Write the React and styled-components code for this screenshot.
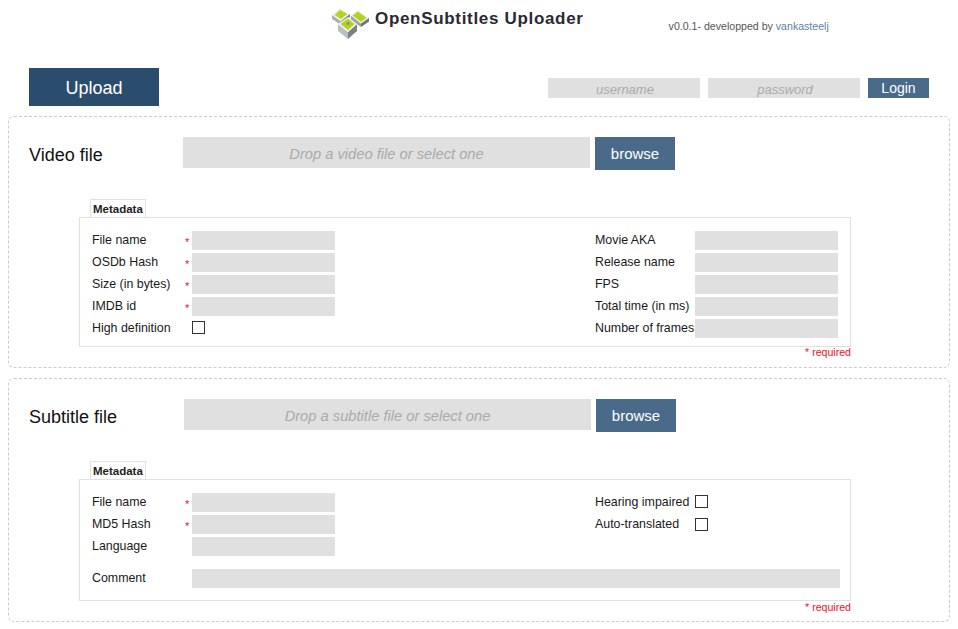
import styled, { createGlobalStyle } from "styled-components";

const GlobalStyle = createGlobalStyle`
body {
  margin: 0;
  background: #fff;
  font-family: "Liberation Sans", Arial, sans-serif;
  color: #111;
}
`

const Header = styled.header`
  display: flex;
  height: 68px;
  padding-left: 332px;
  box-sizing: border-box;
`
const Logo = styled.svg`
  width: 37px;
  height: 33px;
  margin-top: 6px;
  flex: none;
`
const AppTitle = styled.h1`
  margin: 9px 0 0 6px;
  font-size: 17px;
  line-height: 20px;
  font-weight: bold;
  letter-spacing: 0.68px;
  color: #2a2a33;
  white-space: nowrap;
`
const Version = styled.div`
  margin: 20px 0 0 85px;
  font-size: 10.6px;
  line-height: 12px;
  color: #555;
  white-space: nowrap;
  a {
    color: #5d7fa3;
    text-decoration: none;
  }
`
const TopBar = styled.div`
  display: flex;
  justify-content: space-between;
  padding: 0 29px;
  margin-bottom: 10px;
`
const UploadButton = styled.button`
  width: 130px;
  height: 38px;
  border: 0;
  padding: 2px 0 0;
  background: #2a4d6e;
  color: #fff;
  font: 18px "Liberation Sans", Arial, sans-serif;
`
const LoginForm = styled.form`
  display: flex;
  gap: 8px;
  margin-top: 10px;
`
const LoginInput = styled.input`
  width: 152px;
  height: 20px;
  box-sizing: border-box;
  border: 0;
  padding: 2px 0 0 2px;
  background: #e0e0e0;
  text-align: center;
  font: italic 13px "Liberation Sans", Arial, sans-serif;
  &::placeholder { color: #aaa; opacity: 1; }
`
const LoginButton = styled.button`
  width: 61px;
  height: 20px;
  border: 0;
  padding: 0;
  background: #4a6a8a;
  color: #fff;
  font: 14px "Liberation Sans", Arial, sans-serif;
`
const Panel = styled.section`
  width: 942px;
  box-sizing: border-box;
  margin: 0 0 10px 8px;
  padding: 20px 0 0 20px;
  height: ${p => p.$height}px;
  border: 1px dashed #ccc;
  border-radius: 6px;
`
const DropRow = styled.div`
  display: flex;
  align-items: flex-start;
  margin-bottom: 27px;
`
const PanelTitle = styled.h2`
  width: ${p => p.$width}px;
  margin: 0;
  padding-top: 2px;
  font-size: 18px;
  line-height: 33px;
  font-weight: normal;
  color: #111;
`
const DropInput = styled.input`
  width: 407px;
  height: 31px;
  box-sizing: border-box;
  border: 0;
  padding: 3px 0 0;
  margin-right: 5px;
  background: #e0e0e0;
  text-align: center;
  font: italic 14.7px "Liberation Sans", Arial, sans-serif;
  &::placeholder { color: #aaa; opacity: 1; }
`
const BrowseButton = styled.button`
  width: 80px;
  height: 33px;
  border: 0;
  padding: 0;
  background: #4a6a8a;
  color: #fff;
  font: 15px "Liberation Sans", Arial, sans-serif;
`
const Metadata = styled.div`
  width: 772px;
  margin-left: 50px;
`
const Tab = styled.div`
  width: 56px;
  height: 18px;
  box-sizing: border-box;
  margin-left: 11px;
  border: 1px solid #e0e0e0;
  border-bottom: 0;
  padding-left: 2px;
  font-size: 11.5px;
  line-height: 19px;
  font-weight: bold;
  color: #222;
`
const MetaBox = styled.div`
  box-sizing: border-box;
  height: ${p => p.$height}px;
  padding: 13px 12px 0;
  border: 1px solid #e0e0e0;
`
const Columns = styled.div`
  display: flex;
  justify-content: space-between;
`
const Column = styled.div`
  display: flex;
  flex-direction: column;
  gap: 3px;
  width: ${p => p.$width}px;
`
const Field = styled.label`
  display: flex;
  align-items: center;
  height: 19px;
  font-size: 12.4px;
  color: #1a1a1a;
  white-space: nowrap;
`
const FieldName = styled.span`
  width: ${p => p.$width}px;
  flex: none;
  padding-bottom: 2px;
`
const Star = styled.span`
  width: 7px;
  flex: none;
  padding-top: 3px;
  color: #e0202a;
  font-size: 11px;
  visibility: ${p => (p.$hidden ? "hidden" : "visible")};
`
const TextInput = styled.input`
  width: ${p => p.$width || 143}px;
  flex: none;
  height: 19px;
  box-sizing: border-box;
  border: 0;
  padding: 0;
  background: #e0e0e0;
`
const Check = styled.input.attrs({ type: "checkbox" })`
  appearance: none;
  align-self: flex-start;
  width: 13px;
  height: 13px;
  box-sizing: border-box;
  margin: ${p => p.$top || 2}px 0 0;
  border: 1px solid #333;
  background: #fff;
`
const CommentRow = styled(Field)`
  margin-top: 13px;
`
const Required = styled.div`
  margin-top: ${p => p.$top || 0}px;
  text-align: right;
  font-size: 10.6px;
  line-height: 11px;
  color: #f0102a;
`

const LeftField = ({ name, required, children }) => (
  <Field>
    <FieldName $width={93}>{name}</FieldName>
    <Star $hidden={!required}>*</Star>
    {children || <TextInput />}
  </Field>
)

const RightField = ({ name, children }) => (
  <Field>
    <FieldName $width={100}>{name}</FieldName>
    {children || <TextInput />}
  </Field>
)

const App = () => {
  return (
    <>
      <GlobalStyle />
      <Header>
        <Logo viewBox="0 0 37 33">
          {/* right cube */}
          <path d="M19 9.5 29 17.5V21L19 14Z" fill="#9aa3a8" />
          <path d="M19 9.5 26 4 37 12 29 17.5Z" fill="#f0f2ee" />
          <path d="M20.5 9.5 26 5.5 34.5 12 29 16Z" fill="#b4d21e" />
          <path d="M29 17.5 37 12V15.5L29 21Z" fill="#6d7478" />
          {/* left cube */}
          <path d="M0 9 9 15V19L0 13Z" fill="#a9b0b4" />
          <path d="M0 9 8 2 18 8 9 15Z" fill="#f0f2ee" />
          <path d="M2.5 9 8 4 15.5 8 9 13Z" fill="#b4d21e" />
          <path d="M9 15 18 8V11L9 19Z" fill="#7b8286" />
          {/* front cube */}
          <path d="M6 18 16 26V33L6 25Z" fill="#b9c0c4" />
          <path d="M16 26 25 18V25L16 33Z" fill="#7b8286" />
          <path d="M6 18 16 11 25 18 16 26Z" fill="#f0f2ee" />
          <path d="M8.5 18 16 12.5 22.5 18 16 24Z" fill="#b4d21e" />
          <circle cx="16" cy="17.5" r="1.4" fill="#6f9a8a" />
        </Logo>
        <AppTitle>OpenSubtitles Uploader</AppTitle>
        <Version>v0.0.1- developped by <a href="#">vankasteelj</a></Version>
      </Header>

      <TopBar>
        <UploadButton type="button">Upload</UploadButton>
        <LoginForm>
          <LoginInput placeholder="username" />
          <LoginInput placeholder="password" />
          <LoginButton type="button">Login</LoginButton>
        </LoginForm>
      </TopBar>

      <Panel $height={252}>
        <DropRow>
          <PanelTitle $width={154}>Video file</PanelTitle>
          <DropInput placeholder="Drop a video file or select one" />
          <BrowseButton type="button">browse</BrowseButton>
        </DropRow>
        <Metadata>
          <Tab>Metadata</Tab>
          <MetaBox $height={130}>
            <Columns>
              <Column>
                <LeftField name="File name" required />
                <LeftField name="OSDb Hash" required />
                <LeftField name="Size (in bytes)" required />
                <LeftField name="IMDB id" required />
                <LeftField name="High definition"><Check /></LeftField>
              </Column>
              <Column $width={243}>
                <RightField name="Movie AKA" />
                <RightField name="Release name" />
                <RightField name="FPS" />
                <RightField name="Total time (in ms)" />
                <RightField name="Number of frames" />
              </Column>
            </Columns>
          </MetaBox>
          <Required>* required</Required>
        </Metadata>
      </Panel>

      <Panel $height={244}>
        <DropRow>
          <PanelTitle $width={155}>Subtitle file</PanelTitle>
          <DropInput placeholder="Drop a subtitle file or select one" />
          <BrowseButton type="button">browse</BrowseButton>
        </DropRow>
        <Metadata>
          <Tab>Metadata</Tab>
          <MetaBox $height={122}>
            <Columns>
              <Column>
                <LeftField name="File name" required />
                <LeftField name="MD5 Hash" required />
                <LeftField name="Language" />
              </Column>
              <Column $width={243}>
                <RightField name="Hearing impaired"><Check /></RightField>
                <RightField name="Auto-translated"><Check $top={3} /></RightField>
              </Column>
            </Columns>
            <CommentRow>
              <FieldName $width={100}>Comment</FieldName>
              <TextInput $width={648} />
            </CommentRow>
          </MetaBox>
          <Required $top={1}>* required</Required>
        </Metadata>
      </Panel>
    </>
  )
}

export default App
